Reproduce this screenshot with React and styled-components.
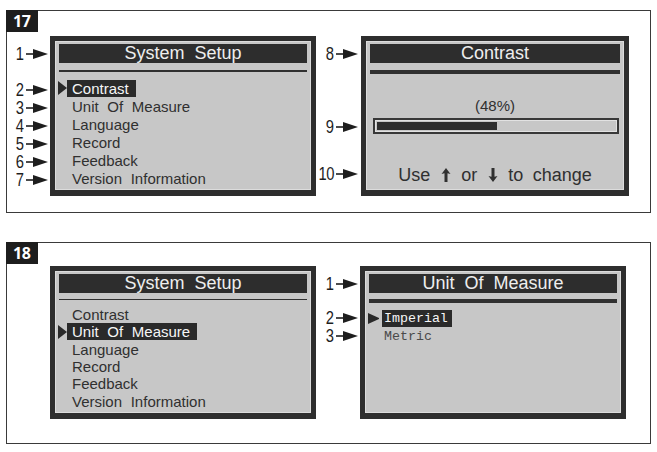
import React from "react";
import styled, { createGlobalStyle } from "styled-components";

const Global = createGlobalStyle`
  html, body { margin: 0; padding: 0; background: #ffffff; }
  body { font-family: "Liberation Sans", Arial, sans-serif; }
`;

const Page = styled.main`
  padding: 10px 6px 0 6px;
`;

const Figure = styled.section`
  box-sizing: border-box;
  width: 645px;
  height: ${(p) => p.$h}px;
  border: 1px solid #3a3a3a;
  & + & { margin-top: 29px; }
`;

const Badge = styled.div`
  box-sizing: border-box;
  width: 32px;
  height: 22px;
  margin: -1px 0 0 -1px;
  padding-left: 7px;
  background: #1d1d1d;
  color: #ffffff;
  font: 700 16px/22px "Open Sans", "Liberation Sans", sans-serif;
  letter-spacing: -0.5px;
`;

const Row = styled.div`
  display: grid;
  grid-template-columns: ${(p) => p.$cols};
  align-items: start;
  margin-top: ${(p) => p.$top}px;
`;

const CalloutColumn = styled.div`
  display: flex;
  flex-direction: column;
  align-items: flex-end;
  padding-right: ${(p) => p.$pr}px;
`;

const Callout = styled.div`
  display: flex;
  align-items: center;
  gap: 2px;
  height: 18px;
  margin-top: ${(p) => p.$top || 0}px;
  color: #1e1e1e;
  font: 18px/18px "Liberation Sans", Arial, sans-serif;
`;

const Num = styled.span`
  display: inline-block;
  transform: scaleX(0.82);
  transform-origin: right center;
  letter-spacing: -0.5px;
`;

const Screen = styled.div`
  box-sizing: border-box;
  height: ${(p) => p.$h}px;
  padding: 5px 5px 6px;
  background: #2e2e2e;
  display: flex;
`;

const Panel = styled.div`
  flex: 1;
  min-width: 0;
  display: flex;
  flex-direction: column;
  padding: 2px 3px;
  background: #c7c7c7;
  border: 1px solid #dcdcdc;
  font-family: "Liberation Sans", Arial, sans-serif;
  color: #303030;
`;

const TitleBar = styled.div`
  height: 19px;
  background: #2d2d2d;
  color: #eeeeee;
  font-size: 18px;
  line-height: 19px;
  word-spacing: 5px;
  text-align: center;
  white-space: nowrap;
`;

const Rule = styled.div`
  height: 4px;
  margin-top: ${(p) => p.$top}px;
  background: #303030;
`;

const Menu = styled.ul`
  list-style: none;
  margin: ${(p) => p.$top}px 0 0;
  padding: 0;
`;

const MenuItem = styled.li`
  display: flex;
  align-items: center;
  height: ${(p) => p.$h}px;
`;

const Pointer = styled.span`
  flex: none;
  box-sizing: border-box;
  width: ${(p) => (p.$mono ? 11 : 9)}px;
  height: ${(p) => (p.$mono ? 11 : 14)}px;
  margin: 0 ${(p) => (p.$mono ? 3 : 0)}px 0 -1px;
  border-top: ${(p) => (p.$mono ? 5.5 : 7)}px solid transparent;
  border-bottom: ${(p) => (p.$mono ? 5.5 : 7)}px solid transparent;
  border-left: ${(p) => (p.$mono ? 11 : 9)}px solid ${(p) => (p.$on ? "#2a2a2a" : "transparent")};
`;

const ItemLabel = styled.span`
  height: 17px;
  line-height: 17px;
  padding: ${(p) => (p.$mono ? "0 4px 0 2px" : "0 7px 0 5px")};
  white-space: nowrap;
  font-family: ${(p) =>
    p.$mono ? '"Liberation Mono", "DejaVu Sans Mono", monospace' : '"Liberation Sans", Arial, sans-serif'};
  font-size: ${(p) => (p.$mono ? "13.3px" : "15px")};
  word-spacing: ${(p) => (p.$mono ? 0 : 4.5)}px;
  color: ${(p) => (p.$on ? "#f6f6f6" : p.$mono ? "#4a4a4a" : "#303030")};
  background: ${(p) => (p.$on ? "#2a2a2a" : "transparent")};
`;

const Percent = styled.div`
  margin-top: 23px;
  text-align: center;
  font-size: 15px;
  line-height: 18px;
`;

const Track = styled.div`
  box-sizing: border-box;
  height: 16px;
  margin: 3px 1px 0 3px;
  padding: 2px;
  border: 2px solid #383838;
  box-shadow: inset 0 0 0 1px #e2e2e2;
`;

const Fill = styled.div`
  height: 8px;
  background: #2e2e2e;
`;

const Hint = styled.div`
  margin-top: auto;
  margin-bottom: 2px;
  text-align: center;
  font-size: 18px;
  line-height: 20px;
  word-spacing: 4.5px;
  white-space: nowrap;
`;

const ArrowGlyph = styled.svg`
  display: inline-block;
  vertical-align: -1px;
  margin: 0 1px;
`;

function CalloutArrow() {
  return (
    <svg width="22" height="10" viewBox="0 0 22 10" aria-hidden="true">
      <line x1="0" y1="5" x2="8" y2="5" stroke="#1e1e1e" strokeWidth="1.6" />
      <polygon points="7,0 22,5 7,10" fill="#1e1e1e" />
    </svg>
  );
}

function Mark({ n, top }) {
  return (
    <Callout $top={top}>
      <Num>{n}</Num>
      <CalloutArrow />
    </Callout>
  );
}

function Up() {
  return (
    <ArrowGlyph width="10" height="14" viewBox="0 0 10 14" aria-hidden="true">
      <polygon points="5,0 9.5,6 6.5,5.2 6.5,14 3.5,14 3.5,5.2 0.5,6" fill="#303030" />
    </ArrowGlyph>
  );
}

function Down() {
  return (
    <ArrowGlyph width="10" height="14" viewBox="0 0 10 14" aria-hidden="true">
      <polygon points="5,14 9.5,8 6.5,8.8 6.5,0 3.5,0 3.5,8.8 0.5,8" fill="#303030" />
    </ArrowGlyph>
  );
}

const setupItems = [
  "Contrast",
  "Unit Of Measure",
  "Language",
  "Record",
  "Feedback",
  "Version Information",
];

function MenuScreen({ title, items, active, h, ruleTop, menuTop, rowH, mono }) {
  return (
    <Screen $h={h}>
      <Panel>
        <TitleBar>{title}</TitleBar>
        <Rule $top={ruleTop} />
        <Menu $top={menuTop}>
          {items.map((it, i) => (
            <MenuItem key={it} $h={rowH}>
              <Pointer $on={i === active} $mono={mono} />
              <ItemLabel $on={i === active} $mono={mono}>
                {it}
              </ItemLabel>
            </MenuItem>
          ))}
        </Menu>
      </Panel>
    </Screen>
  );
}

function ContrastScreen({ value }) {
  const fill = Math.min(100, value * 1.05);
  return (
    <Screen $h={160}>
      <Panel>
        <TitleBar>Contrast</TitleBar>
        <Rule $top={7} />
        <Percent>({value}%)</Percent>
        <Track>
          <Fill style={{ width: `${fill}%` }} />
        </Track>
        <Hint>
          Use <Up /> or <Down /> to change
        </Hint>
      </Panel>
    </Screen>
  );
}

export default function App() {
  return (
    <>
      <Global />
      <Page>
        <Figure $h={203}>
          <Badge>17</Badge>
          <Row $cols="43px 266px 45px 268px" $top={4}>
            <CalloutColumn $pr={2}>
              <Mark n="1" top={9} />
              <Mark n="2" top={18} />
              <Mark n="3" />
              <Mark n="4" />
              <Mark n="5" />
              <Mark n="6" />
              <Mark n="7" />
            </CalloutColumn>
            <MenuScreen
              title="System Setup"
              items={setupItems}
              active={0}
              h={160}
              ruleTop={7}
              menuTop={7}
              rowH={18}
            />
            <CalloutColumn $pr={3}>
              <Mark n="8" top={9} />
              <Mark n="9" top={55} />
              <Mark n="10" top={29} />
            </CalloutColumn>
            <ContrastScreen value={48} />
          </Row>
        </Figure>

        <Figure $h={202}>
          <Badge>18</Badge>
          <Row $cols="43px 266px 44px 266px" $top={2}>
            <div />
            <MenuScreen
              title="System Setup"
              items={setupItems}
              active={1}
              h={153}
              ruleTop={6}
              menuTop={6}
              rowH={17.4}
            />
            <CalloutColumn $pr={2}>
              <Mark n="1" top={9} />
              <Mark n="2" top={16} />
              <Mark n="3" />
            </CalloutColumn>
            <MenuScreen
              title="Unit Of Measure"
              items={["Imperial", "Metric"]}
              active={0}
              h={153}
              ruleTop={6}
              menuTop={6}
              rowH={18}
              mono
            />
          </Row>
        </Figure>
      </Page>
    </>
  );
}
